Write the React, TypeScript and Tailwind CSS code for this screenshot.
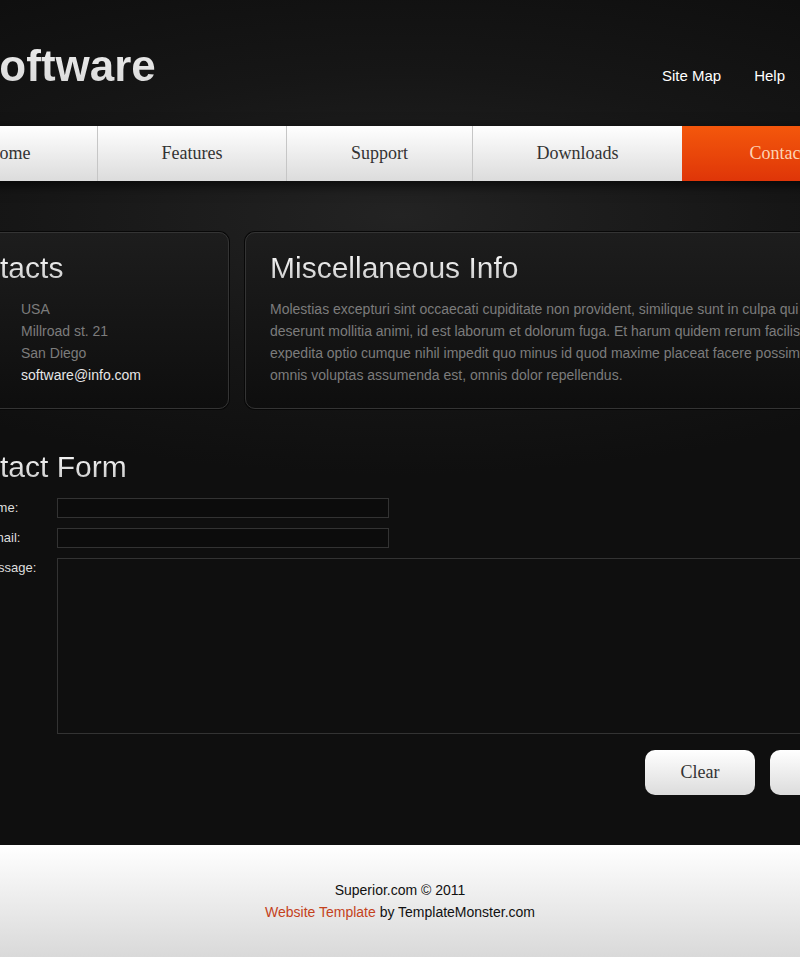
const navItems = [
  { label: "Home", width: "w-[178px]", active: false },
  { label: "Features", width: "w-[189px]", active: false },
  { label: "Support", width: "w-[186px]", active: false },
  { label: "Downloads", width: "w-[209px]", active: false },
  { label: "Contacts", width: "w-[198px]", active: true },
];

const contacts = [
  { value: "USA" },
  { value: "Millroad st. 21" },
  { value: "San Diego" },
  { value: "software@info.com", link: true },
];

function Heading({ children }: { children: React.ReactNode }) {
  return (
    <h2 className="text-[30px] leading-[34px] font-normal bg-linear-to-b from-white to-[#c4c4c4] bg-clip-text text-transparent">
      {children}
    </h2>
  );
}

function Box({ className, children }: { className?: string; children: React.ReactNode }) {
  return (
    <div
      className={`h-[177px] rounded-[10px] border border-[#343434] shadow-[0_0_0_1px_#080808] bg-linear-to-b from-[#1d1d1d] to-[#0e0e0e] pt-[18px] ${className ?? ""}`}
    >
      {children}
    </div>
  );
}

export default function App() {
  return (
    <div className="min-h-[957px] flex flex-col overflow-hidden font-['Liberation_Sans',Arial,sans-serif]">
      <div className="h-[845px] bg-[radial-gradient(ellipse_700px_260px_at_50%_215px,#232323_0%,#161616_55%,#0f0f0f_100%)] flex justify-center">
        <div className="w-[960px] shrink-0">
          {/* header */}
          <div className="h-[126px] flex justify-between items-start">
            <div className="pt-[40px] pl-[50px] text-[44px] leading-[52px] font-bold bg-linear-to-b from-white to-[#d8d8d8] bg-clip-text text-transparent">
              Software
            </div>
            <div className="pt-[67px] pr-[95px] flex gap-[33px] text-[15px] leading-[18px] text-white">
              <a href="#">Site Map</a>
              <a href="#">Help</a>
            </div>
          </div>

          {/* nav */}
          <div className="h-[55px] flex shadow-[0_4px_12px_rgba(0,0,0,0.7)] font-['Liberation_Serif',Georgia,serif] text-[18px]">
            {navItems.map((item, i) => (
              <a
                key={item.label}
                href="#"
                className={
                  item.active
                    ? `${item.width} shrink-0 text-center leading-[55px] bg-linear-to-b from-[#f4570c] to-[#df3508] text-[#fcd3b4]`
                    : `${item.width} shrink-0 text-center leading-[55px] bg-linear-to-b from-white to-[#dcdcdc] text-[#333] ${
                        i < 3 ? "border-r border-[#c6c6c6]" : ""
                      }`
                }
              >
                {item.label}
              </a>
            ))}
          </div>

          {/* boxes */}
          <div className="mt-[51px] flex gap-[16px]">
            <Box className="w-[309px] pl-[24px]">
              <Heading>Contacts</Heading>
              <ul className="mt-[13px] pl-[76px] text-[14px] leading-[22px]">
                {contacts.map((c) => (
                  <li key={c.value} className={c.link ? "text-[#e6e6e6]" : "text-[#7c7c7c]"}>
                    {c.value}
                  </li>
                ))}
              </ul>
            </Box>
            <Box className="flex-1 pl-[24px] pr-[24px]">
              <Heading>Miscellaneous Info</Heading>
              <p className="mt-[13px] text-[14px] leading-[22px] text-[#7c7c7c]">
                Molestias excepturi sint occaecati cupiditate non provident, similique sunt in culpa qui officia
                deserunt mollitia animi, id est laborum et dolorum fuga. Et harum quidem rerum facilis est et
                expedita optio cumque nihil impedit quo minus id quod maxime placeat facere possimus, omnis voluptas
                assumenda est, omnis dolor repellendus.
              </p>
            </Box>
          </div>

          {/* contact form */}
          <div className="mt-[41px] pl-[25px]">
            <Heading>Contact Form</Heading>
          </div>
          <form className="mt-[14px] pl-[60px] text-[13px] text-[#dedede]">
            <div className="flex items-center h-[20px]">
              <label className="w-[77px] leading-[20px]">Name:</label>
              <input className="w-[332px] h-[20px] bg-[#0c0c0c] border border-[#333] outline-none" />
            </div>
            <div className="flex items-center h-[20px] mt-[10px]">
              <label className="w-[77px] leading-[20px]">E-mail:</label>
              <input className="w-[332px] h-[20px] bg-[#0c0c0c] border border-[#333] outline-none" />
            </div>
            <div className="flex items-start mt-[10px]">
              <label className="w-[77px] leading-[20px]">Message:</label>
              <textarea className="flex-1 h-[176px] bg-[#0f0f0f] border border-[#333] outline-none resize-none" />
            </div>
            <div className="mt-[16px] flex justify-end gap-[15px] font-['Liberation_Serif',Georgia,serif] text-[18px] text-[#333]">
              <button type="button" className="w-[110px] h-[45px] rounded-[10px] bg-linear-to-b from-white to-[#dcdcdc]">
                Clear
              </button>
              <button type="button" className="w-[110px] h-[45px] rounded-[10px] bg-linear-to-b from-white to-[#dcdcdc]">
                Send
              </button>
            </div>
          </form>
        </div>
      </div>

      {/* footer */}
      <div className="h-[112px] bg-linear-to-b from-white to-[#d9d9d9] flex flex-col items-center justify-center text-[14px] leading-[22px] text-[#111]">
        <div>Superior.com © 2011</div>
        <div>
          <a href="#" className="text-[#c4421c]">
            Website Template
          </a>{" "}
          by TemplateMonster.com
        </div>
      </div>
    </div>
  );
}
